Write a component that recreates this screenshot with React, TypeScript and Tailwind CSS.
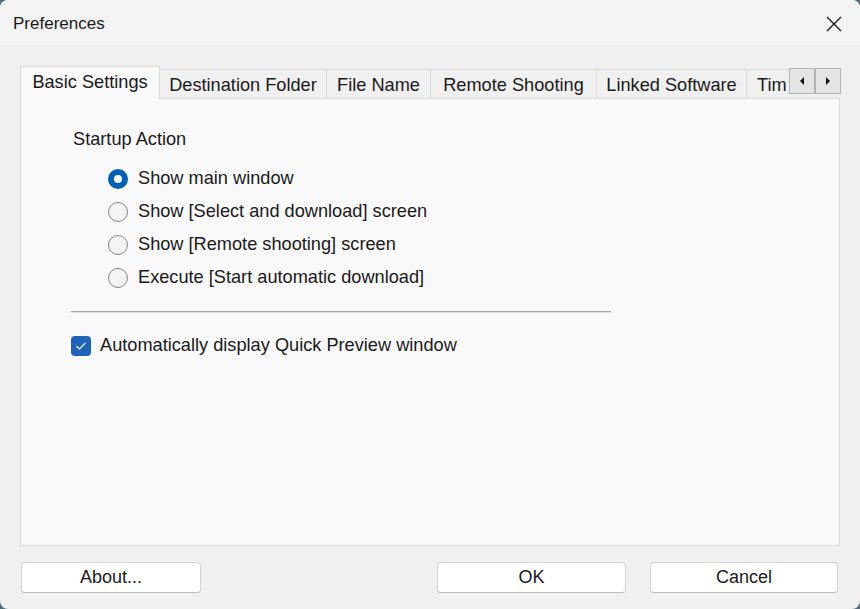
import React from 'react';

const font = { fontFamily: '"Liberation Sans", Arial, sans-serif' };

const tabs = [
  { label: 'Basic Settings', w: 'w-[140px]' },
  { label: 'Destination Folder', w: 'w-[167px]' },
  { label: 'File Name', w: 'w-[104px]' },
  { label: 'Remote Shooting', w: 'w-[166px]' },
  { label: 'Linked Software', w: 'w-[150px]' },
];

const startupOptions = [
  'Show main window',
  'Show [Select and download] screen',
  'Show [Remote shooting] screen',
  'Execute [Start automatic download]',
];

const Radio: React.FC<{ checked: boolean }> = ({ checked }) =>
  checked ? (
    <span className="w-[20px] h-[20px] rounded-full bg-[#005fb8] flex items-center justify-center shrink-0">
      <span className="w-[8px] h-[8px] rounded-full bg-white" />
    </span>
  ) : (
    <span className="w-[20px] h-[20px] rounded-full border border-[#858585] bg-[#f3f3f3] shrink-0" />
  );

const ScrollButton: React.FC<{ dir: 'left' | 'right' }> = ({ dir }) => (
  <div className="w-[26px] h-[26px] bg-[#e4e4e4] border border-[#b4b4b4] flex items-center justify-center">
    <svg width="6" height="8" viewBox="0 0 6 8">
      {dir === 'left' ? <path d="M5 0 L1 4 L5 8 Z" fill="#111" /> : <path d="M1 0 L5 4 L1 8 Z" fill="#111" />}
    </svg>
  </div>
);

export default function App() {
  const [selected, setSelected] = React.useState(0);
  const [quickPreview, setQuickPreview] = React.useState(true);

  return (
    <div className="w-[860px] h-[609px] bg-[#4f6d7b]" style={font}>
      <div className="w-full h-full rounded-[8px] bg-[#f0f0f0] flex flex-col text-[#1a1a1a] overflow-hidden">
        {/* Title bar */}
        <div className="h-[45px] bg-[#f3f3f3] flex items-center justify-between pl-[13px] pr-[18px] pt-[3px]">
          <span className="text-[17px]">Preferences</span>
          <svg width="16" height="16" viewBox="0 0 16 16">
            <path d="M1 1 L15 15 M15 1 L1 15" stroke="#1a1a1a" strokeWidth="1.4" />
          </svg>
        </div>

        {/* Tab strip */}
        <div className="mt-[21px] ml-[20px] w-[821px] flex items-start h-[33px] relative z-10">
          <div className="w-[769px] overflow-hidden flex items-end h-[33px] text-[18.2px]">
            {tabs.map((t, i) =>
              i === 0 ? (
                <div
                  key={t.label}
                  className={`${t.w} shrink-0 h-[33px] bg-[#f9f9f9] border border-b-0 border-[#dadada] flex items-center justify-center pb-[1px]`}
                >
                  {t.label}
                </div>
              ) : (
                <div
                  key={t.label}
                  className={`${t.w} shrink-0 h-[29px] mb-px bg-[#f0f0f0] border-t border-r border-[#dadada] flex items-center justify-center whitespace-nowrap pt-[3px]`}
                >
                  {t.label}
                </div>
              )
            )}
            {/* partly hidden tab behind the scroll arrows */}
            <div className="flex-1 h-[29px] mb-px bg-[#f0f0f0] border-t border-[#dadada] flex items-center pl-[10px] pt-[3px]">
              Tim
            </div>
          </div>
          <div className="flex mt-[2px]">
            <ScrollButton dir="left" />
            <ScrollButton dir="right" />
          </div>
        </div>

        {/* Panel */}
        <div className="ml-[20px] -mt-px w-[820px] h-[448px] bg-[#f9f9f9] border border-[#dadada] pt-[29px] pl-[52px] text-[18.2px]">
          <div className="h-[22px] leading-[22px]">Startup Action</div>
          <div className="mt-[12px] ml-[35px] flex flex-col">
            {startupOptions.map((opt, i) => (
              <div key={opt} className="h-[33px] flex items-center gap-[10px]" onClick={() => setSelected(i)}>
                <Radio checked={selected === i} />
                <span>{opt}</span>
              </div>
            ))}
          </div>
          <div className="mt-[17px] -ml-[2px] w-[540px] h-[2px] border-t border-[#a6a6a6] border-b border-b-[#e2e2e2]" />
          <div
            className="mt-[22px] -ml-[2px] h-[22px] flex items-center gap-[9px]"
            onClick={() => setQuickPreview(!quickPreview)}
          >
            <span className="w-[20px] h-[20px] rounded-[4px] bg-[#1d63b8] flex items-center justify-center">
              {quickPreview && (
                <svg width="12" height="10" viewBox="0 0 12 10">
                  <path d="M1.5 5.2 L4.5 8 L10.5 1.8" stroke="white" strokeWidth="1.2" fill="none" />
                </svg>
              )}
            </span>
            <span>Automatically display Quick Preview window</span>
          </div>
        </div>

        {/* Buttons */}
        <div className="mt-[16px] flex pl-[21px] pr-[22px] text-[18px]">
          <button className="w-[180px] h-[31px] bg-white border border-[#d3d3d3] border-b-[#bcbcbc] rounded-[4px]">
            About...
          </button>
          <div className="ml-auto flex gap-[24px]">
            <button className="w-[189px] h-[31px] bg-white border border-[#d3d3d3] border-b-[#bcbcbc] rounded-[4px]">
              OK
            </button>
            <button className="w-[188px] h-[31px] bg-white border border-[#d3d3d3] border-b-[#bcbcbc] rounded-[4px]">
              Cancel
            </button>
          </div>
        </div>
      </div>
    </div>
  );
}
